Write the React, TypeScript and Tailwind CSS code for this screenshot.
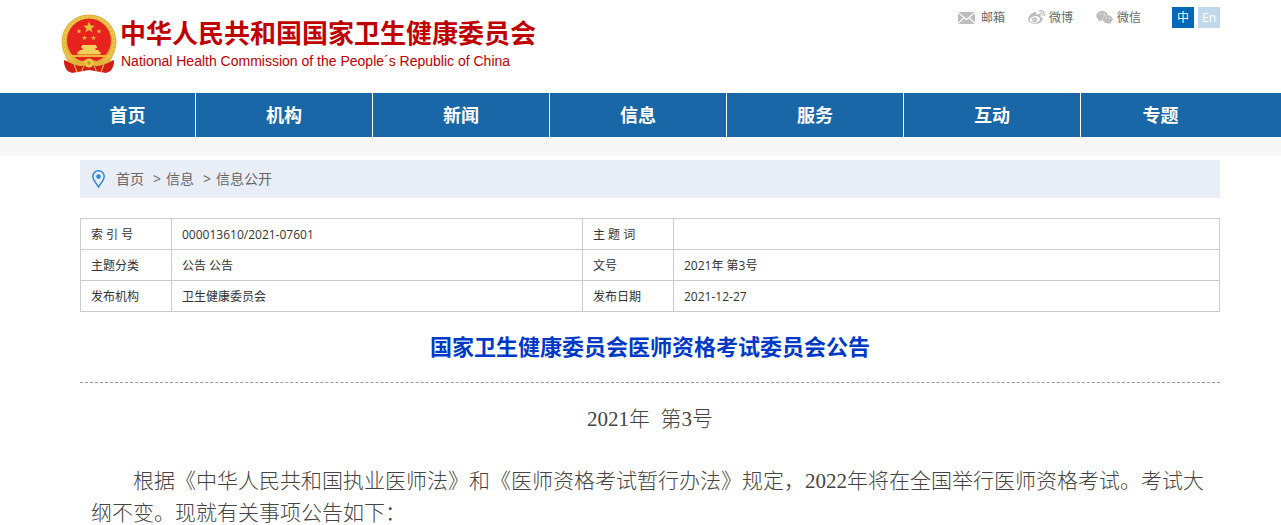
import { FaWeibo, FaWeixin } from 'react-icons/fa';

const navItems = ['首页', '机构', '新闻', '信息', '服务', '互动', '专题'];

const infoRows = [
  ['索 引 号', '000013610/2021-07601', '主 题 词', ''],
  ['主题分类', '公告 公告', '文号', '2021年 第3号'],
  ['发布机构', '卫生健康委员会', '发布日期', '2021-12-27'],
];

export default function App() {
  return (
    <div className="bg-white overflow-x-hidden font-['Open_Sans','Noto_Sans_CJK_SC',sans-serif] text-[#333]">
      <Header />
      <MainNav />
      <div className="h-[19px] bg-[#f7f7f7]" />
      <main className="pl-20 pr-[61px] pt-1">
        <Breadcrumb />
        <InfoTable />
        <Article />
      </main>
    </div>
  );
}

function Header() {
  return (
    <header className="flex justify-between items-start h-[93px] pl-[60px] pr-[61px]">
      <a href="#" className="flex gap-[3px] pt-[13px] text-[#c00000]">
        <Emblem />
        <span className="flex flex-col pt-1 whitespace-nowrap">
          <span className="text-[26px] leading-8 font-bold">中华人民共和国国家卫生健康委员会</span>
          <span className="pl-px pt-0.5 text-sm leading-5 font-['Liberation_Sans',sans-serif]">
            National Health Commission of the People´s Republic of China
          </span>
        </span>
      </a>

      <div className="flex items-center pt-[7px] text-xs leading-[21px] text-[#666] whitespace-nowrap">
        <a href="#" className="flex items-center gap-1.5 mr-[23px]">
          <MailIcon />
          邮箱
        </a>
        <a href="#" className="flex items-center gap-1 mr-[23px]">
          <FaWeibo className="w-[17px] h-[17px] text-[#bdbdbd]" />
          微博
        </a>
        <a href="#" className="flex items-center gap-1 mr-[31px]">
          <FaWeixin className="w-[17px] h-[17px] text-[#bdbdbd]" />
          微信
        </a>
        <a href="#" className="w-[22px] mr-1 bg-[#0068b7] text-white text-center">中</a>
        <a href="#" className="w-[22px] bg-[#c1d9ea] text-white text-center">En</a>
      </div>
    </header>
  );
}

function MainNav() {
  return (
    <nav className="bg-[#1a67a8] pl-[60px] pr-[41px]">
      <ul className="grid grid-cols-[136fr_177fr_177fr_177fr_177fr_177fr_159fr]">
        {navItems.map((item) => (
          <li key={item} className="border-r border-white last:border-r-0">
            <a href="#" className="block h-11 leading-[44px] text-lg text-center font-bold text-white">
              {item}
            </a>
          </li>
        ))}
      </ul>
    </nav>
  );
}

function Breadcrumb() {
  return (
    <nav className="flex items-center h-[38px] pl-3 bg-[#e9edf5] text-sm text-[#666]">
      <PinIcon />
      <a href="#" className="ml-[11px]">首页</a>
      <span className="ml-[9px] mr-[5px]">&gt;</span>
      <a href="#">信息</a>
      <span className="ml-[9px] mr-[5px]">&gt;</span>
      <a href="#">信息公开</a>
    </nav>
  );
}

function InfoTable() {
  return (
    <table className="w-full mt-5 table-fixed border-collapse text-xs text-[#333]">
      <colgroup>
        <col className="w-[91px]" />
        <col className="w-[411px]" />
        <col className="w-[91px]" />
        <col />
      </colgroup>
      <tbody>
        {infoRows.map((row) => (
          <tr key={row[0]} className="h-[31px]">
            <th scope="row" className="border border-[#ccc] px-2.5 pt-0.5 text-left font-normal">{row[0]}</th>
            <td className="border border-[#ccc] px-2.5 pt-0.5">{row[1]}</td>
            <th scope="row" className="border border-[#ccc] px-2.5 pt-0.5 text-left font-normal">{row[2]}</th>
            <td className="border border-[#ccc] px-2.5 pt-0.5">{row[3]}</td>
          </tr>
        ))}
      </tbody>
    </table>
  );
}

function Article() {
  return (
    <article>
      <h1 className="h-[71px] pt-[18px] border-b border-dashed border-[#999] text-[22px] leading-8 font-bold text-center text-[#0039c8]">
        国家卫生健康委员会医师资格考试委员会公告
      </h1>
      <div className="px-[11px] pt-5 text-[21px] leading-8 font-light text-[#444] font-['Liberation_Serif','Noto_Sans_CJK_SC',serif]">
        <p className="text-center">2021年&nbsp; 第3号</p>
        <p className="mt-[30px] indent-[2em]">
          根据《中华人民共和国执业医师法》和《医师资格考试暂行办法》规定，2022年将在全国举行医师资格考试。考试大纲不变。现就有关事项公告如下：
        </p>
      </div>
    </article>
  );
}

function MailIcon() {
  return (
    <svg className="w-[17px] h-3" viewBox="0 0 17 12" aria-hidden="true">
      <rect width="17" height="12" fill="#bdbdbd" />
      <path d="M0 0.5 L8.5 7.5 L17 0.5 M0 11.5 L6 5.6 M17 11.5 L11 5.6" fill="none" stroke="#fff" strokeWidth="1.1" />
    </svg>
  );
}

function PinIcon() {
  return (
    <svg className="w-[13px] h-[18px]" viewBox="0 0 13 18" aria-hidden="true">
      <path d="M6.5 0.8 C3.3 0.8 0.8 3.3 0.8 6.5 C0.8 10.2 4.6 13.2 6.5 17 C8.4 13.2 12.2 10.2 12.2 6.5 C12.2 3.3 9.7 0.8 6.5 0.8 Z" fill="none" stroke="#2b87d8" strokeWidth="1.5" />
      <circle cx="6.5" cy="6.6" r="2.3" fill="#2b87d8" />
    </svg>
  );
}

function Emblem() {
  return (
    <svg className="w-[57px] h-[61px] shrink-0" viewBox="0 0 57 61" aria-hidden="true">
      <circle cx="29" cy="29" r="27.5" fill="#dfae35" />
      <circle cx="29" cy="29" r="25" fill="none" stroke="#efc94f" strokeWidth="3" />
      <circle cx="29" cy="29" r="25" fill="none" stroke="#d9a630" strokeWidth="1" strokeDasharray="2 2" />
      <circle cx="29" cy="27.5" r="22" fill="#e8221d" />
      {/* big star and the four small ones */}
      <path d="M29 8.5 L30.5 12.5 L34.8 12.7 L31.4 15.4 L32.6 19.5 L29 17.1 L25.4 19.5 L26.6 15.4 L23.2 12.7 L27.5 12.5 Z" fill="#edbd3f" />
      <path id="star" d="M19 15.8 L19.6 17.5 L21.5 17.6 L20 18.7 L20.5 20.5 L19 19.5 L17.5 20.5 L18 18.7 L16.5 17.6 L18.4 17.5 Z" fill="#edbd3f" />
      <use href="#star" x="20" />
      <use href="#star" x="5.5" y="6.5" />
      <use href="#star" x="14.5" y="6.5" />
      {/* gate tower */}
      <path d="M21 33.5 L22.5 32 H35.5 L37 33.5 V35 H35.5 V37 H22.5 V35 H21 Z M19.5 37 H38.5 V38.5 H40.5 V41.5 H17.5 V38.5 H19.5 Z" fill="#f3cf5c" />
      <path d="M10 42 H48 V44 H10 Z" fill="#ecb93c" />
      {/* wheat stalks meeting at the cog, with red drapery */}
      <path d="M4 47 Q3.500 53 7.500 58 L12 60 L29 57 L46 60 L50.500 58 Q54.500 53 54 47 L44 51 Q37 55 29 51 Q21 55 14 51 Z" fill="#d51d18" />
      <path d="M5 43 Q12 50 22 48 L29 46 L36 48 Q46 50 53 43 L50 49 Q43 53 36 52 L29 50.500 L22 52 Q15 53 8 49 Z" fill="#e2b33a" />
      <circle cx="29" cy="50" r="4.5" fill="#eec54b" />
      <circle cx="29" cy="50" r="1.8" fill="#cf941d" />
      <path d="M14 51 L17 59 M44 51 L41 59 M24 53 Q22 56 22 58 M34 53 Q36 56 36 58" fill="none" stroke="#e9b73a" strokeWidth="1.2" />
    </svg>
  );
}
